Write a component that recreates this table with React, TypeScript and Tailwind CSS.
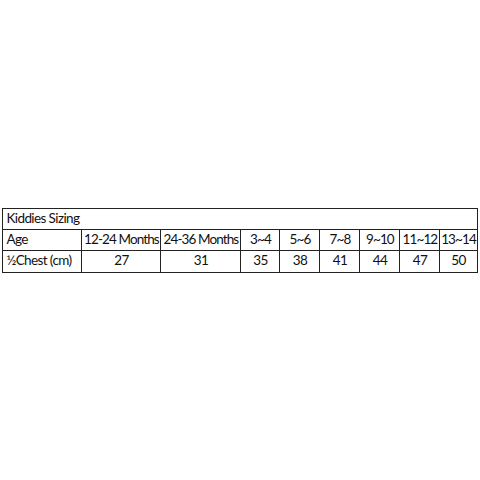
const ages = ['12-24 Months', '24-36 Months', '3~4', '5~6', '7~8', '9~10', '11~12', '13~14']
const chest = ['27', '31', '35', '38', '41', '44', '47', '50']
const widths = ['w-[79px]', 'w-[80px]', 'w-[39px]', 'w-[40px]', 'w-[40px]', 'w-[40px]', 'w-[40px]', 'w-[37px]']

export default function App() {
  return (
    <div className="flex h-[480px] w-[480px] items-center justify-center bg-white font-['Lato',sans-serif] text-[13.5px] tracking-[-0.6px] text-[#111]">
      <table className="w-[475px] table-fixed border-collapse">
        <colgroup>
          <col className="w-[79px]" />
          {widths.map((w, i) => (
            <col key={i} className={w} />
          ))}
        </colgroup>
        <tbody>
          <tr className="h-[21px]">
            <td colSpan={9} className="border border-[#222] px-[3px] leading-none">
              Kiddies Sizing
            </td>
          </tr>
          <tr className="h-[21px]">
            <td className="border border-[#222] px-[3px] leading-none">Age</td>
            {ages.map((a) => (
              <td key={a} className="border border-[#222] px-0 text-center leading-none tracking-[-0.9px] whitespace-nowrap">
                {a}
              </td>
            ))}
          </tr>
          <tr className="h-[22px]">
            <td className="border border-[#222] px-[3px] leading-none">½Chest (cm)</td>
            {chest.map((c) => (
              <td key={c} className="border border-[#222] text-center leading-none">
                {c}
              </td>
            ))}
          </tr>
        </tbody>
      </table>
    </div>
  )
}
